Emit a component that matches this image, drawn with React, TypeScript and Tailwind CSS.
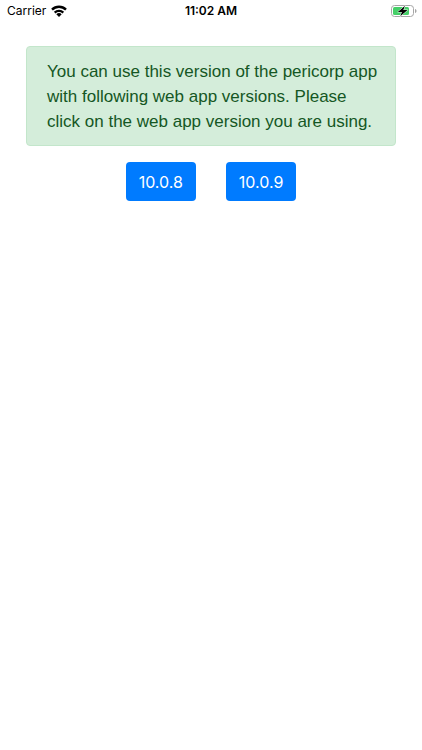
const versions = ['10.0.8', '10.0.9'];

function WifiIcon() {
  return (
    <svg className="h-[12px] w-[16px]" viewBox="0 0 16 12" fill="none" stroke="#000" strokeWidth="2.4" aria-label="Wi-Fi">
      <path d="M1 4.600a10 10 0 0 1 14 0" />
      <path d="M3.700 7.600a6.200 6.200 0 0 1 8.600 0" />
      <path d="M8 12 5.300 9.300a3.900 3.900 0 0 1 5.400 0Z" fill="#000" stroke="none" />
    </svg>
  );
}

function BatteryIcon() {
  return (
    <svg className="h-[12px] w-[26px] justify-self-end" viewBox="0 0 26 12" aria-label="Battery charging">
      <rect x="0.5" y="0.5" width="22" height="11" rx="3" fill="#fff" stroke="#a6a6a6" />
      <rect x="2" y="2" width="16" height="8" rx="1.500" fill="#45cf68" />
      <path d="M24 4v4c1-.3 1.500-1 1.500-2S25 4.300 24 4Z" fill="#a6a6a6" />
      <path d="M14 0.800 6.800 6.900h4.100L9.300 11.300l7.200-6.200h-4.200Z" fill="#000" stroke="#fff" strokeWidth="1" paintOrder="stroke" />
    </svg>
  );
}

export default function App() {
  return (
    <div className="min-h-screen bg-white font-['Inter','Liberation_Sans',sans-serif]">
      <header className="grid h-[22px] grid-cols-3 items-center px-[5px] text-[12px] leading-[22px] text-black">
        <div className="flex items-center gap-[5px] pl-0.5">
          <span>Carrier</span>
          <WifiIcon />
        </div>
        <time className="text-center font-semibold whitespace-nowrap">11:02 AM</time>
        <BatteryIcon />
      </header>
      <main className="px-[26px] pt-6">
        <p className="rounded border border-[#c3e6cb] bg-[#d4edda] pt-3 pr-4 pb-[11px] pl-5 font-['Liberation_Sans',Arial,sans-serif] text-[17px] leading-[25px] text-[#155724]">
          You can use this version of the pericorp app with following web app versions. Please click on the web app version you are using.
        </p>
        <div className="mt-4 flex justify-center gap-[30px]">
          {versions.map((version) => (
            <button key={version} type="button" className="rounded bg-[#007bff] px-[13px] pt-2 pb-1.5 text-[16px] leading-[25px] text-white">
              {version}
            </button>
          ))}
        </div>
      </main>
    </div>
  );
}
